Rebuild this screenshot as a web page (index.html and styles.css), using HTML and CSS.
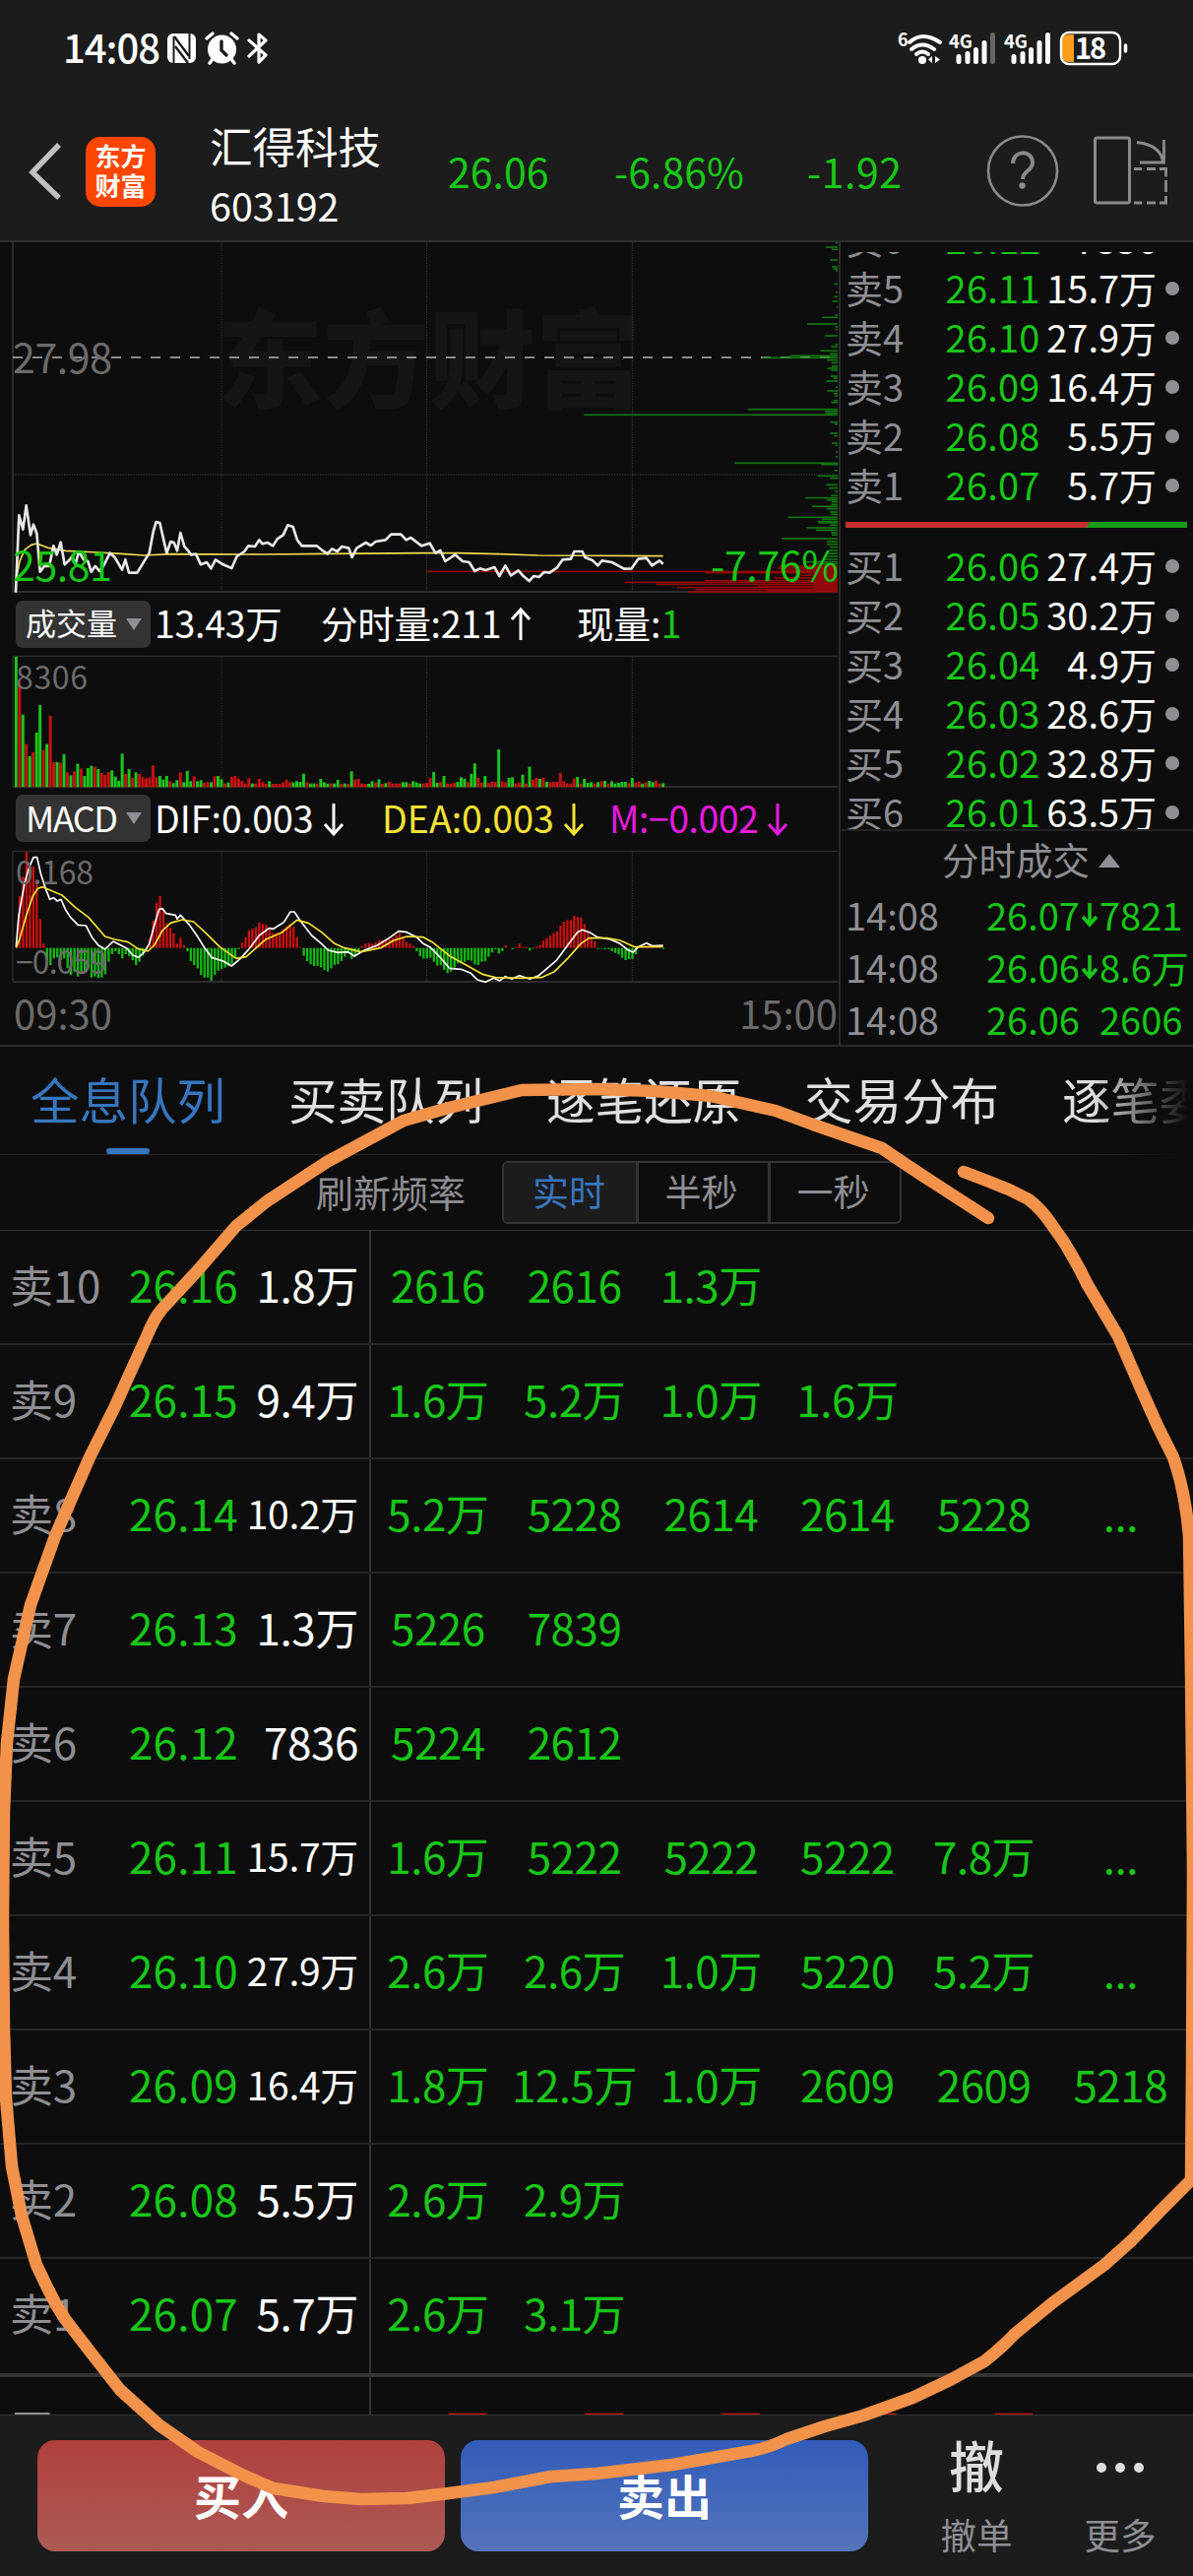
FILE: index.html
```html
<!DOCTYPE html>
<html lang="zh-CN">
<head>
<meta charset="utf-8">
<title>汇得科技 603192</title>
<link rel="stylesheet" href="styles.css">
</head>
<body>
<div class="app">
  <div class="status">
    <span class="clock">14:08</span>
    <svg class="status-icons" width="104" height="34" viewBox="169 32 104 34">
      <rect x="170" y="34" width="29" height="30" rx="6" fill="#fff"/>
      <path d="M176.500 37V64M192.500 34V60" stroke="#1c1c1c" stroke-width="2"/>
      <path d="M177 37L192 57M178 47L191 64" stroke="#1c1c1c" stroke-width="2.400" fill="none"/>
      <circle cx="225.500" cy="50" r="14.500" fill="#fff"/>
      <path d="M210 39l6-5M241 39l-6-5M216 60l-3 4M235 60l3 4" stroke="#fff" stroke-width="3.500" stroke-linecap="round"/>
      <path d="M225 42v9l5 5" stroke="#1c1c1c" stroke-width="3.400" fill="none" stroke-linecap="round"/>
      <path d="M253 41l17 15-7 7V35l7 6-17 16" stroke="#fff" stroke-width="3.200" fill="none" stroke-linejoin="round" stroke-linecap="round"/>
    </svg>
    <svg class="signal" width="236" height="36" viewBox="911 31 236 36">
      <text x="912" y="46.500" font-size="18" font-weight="700">6</text>
      <path d="M924 43Q937 31 955 43M926 50Q937 41 949 50M931 55Q937 50 943 55" fill="none" stroke="#fff" stroke-width="4" stroke-linecap="round"/>
      <circle cx="937" cy="61" r="4"/>
      <path d="M947 57v7l-4-3.500zM950 57v7l5-3.500z"/>
      <text x="964" y="49" font-size="19" font-weight="700" textLength="24" lengthAdjust="spacingAndGlyphs">4G</text>
      <path d="M974 57.500v5M983 54.500v8M991.500 50.500v12M1000 43.500v19" stroke="#fff" stroke-width="5" stroke-linecap="round"/>
      <path d="M1008.500 35.500v27" stroke="#666" stroke-width="5" stroke-linecap="round"/>
      <text x="1020" y="49" font-size="19" font-weight="700" textLength="24" lengthAdjust="spacingAndGlyphs">4G</text>
      <path d="M1030 57.500v5M1039 54.500v8M1047.500 50.500v12M1056 43.500v19M1064.500 35.500v27" stroke="#fff" stroke-width="5" stroke-linecap="round"/>
      <path d="M1091 35v28h-5q-7 0-7-7V42q0-7 7-7z" fill="#ff9c1a"/>
      <rect x="1078" y="33" width="60" height="32" rx="8" fill="none" stroke="#fff" stroke-width="2.400"/>
      <path d="M1143.500 46v6" stroke="#fff" stroke-width="3.500" stroke-linecap="round"/>
      <text x="1092" y="60" font-size="29" font-weight="700" textLength="32">18</text>
    </svg>
  </div>

  <header class="header">
    <svg class="back" width="36" height="60" viewBox="0 0 36 60"><path d="M32 3L5 31L32 57" fill="none" stroke="#c0c0c0" stroke-width="5.500"/></svg>
    <div class="logo"><span>东方</span><span>财富</span></div>
    <div class="stock"><div class="name">汇得科技</div><div class="code">603192</div></div>
    <span class="quote q1">26.06</span>
    <span class="quote q2">-6.86%</span>
    <span class="quote q3">-1.92</span>
    <svg class="tools" width="184" height="74" viewBox="1002 138 184 74" fill="none" stroke="#8a8a8a">
      <ellipse cx="1038" cy="174.500" rx="35" ry="35" stroke-width="2.600"/>
      <path d="M1028 167c0-14 20-14 20-1 0 9-10 8-10 17" stroke-width="4"/>
      <circle cx="1037.500" cy="189.500" r="3.200" fill="#8a8a8a" stroke="none"/>
      <rect x="1111.500" y="141" width="35" height="66" rx="2" stroke-width="3"/>
      <path d="M1154 145.500q25 3 26.500 21M1157 166h24.500V143" stroke-width="2.800"/>
      <path d="M1151 172.500h8M1164 172.500h9M1177 172.500h6.500v8M1183.500 184v12M1183.500 200v7h-6.500M1173 207h-9M1159 207h-8" stroke-width="2.800"/>
    </svg>
  </header>

  <main class="board">
    <section class="charts">
      <svg width="852" height="357" viewBox="0 0 852 357">
        <text class="watermark" x="220" y="160" textLength="432">东方财富</text>
        <path class="axis" d="M13 0V355H851"/>
        <path class="grid" d="M225 0V354M433.500 0V354M642.500 0V354M13 236H851"/>
        <path d="M13 117H851" stroke="#8a8a8a" stroke-width="2" stroke-dasharray="10 10"/>
        <g id="depth" transform="translate(430 -6) scale(.33333)"></g>
        <g transform="translate(0 -6) scale(.33333)" fill="none" stroke-linejoin="round">
          <polyline stroke="#f0dc50" stroke-width="5" points="48,1050 60,990 75,955 95,940 112,936 150,950 200,958 300,963 370,967 440,972 520,968 800,969 1000,967 1290,965 1400,965 1520,968 1640,972 2021,974"/>
          <polyline stroke="#e8e8e8" stroke-width="8" points="48,1085 58,850 70,893 80,820 93,910 102,878 112,905 122,1022 135,1005 150,1005 163,943 173,970 185,932 197,1000 210,988 220,975 230,1000 240,960 255,985 268,990 278,1022 290,1005 303,1020 315,1005 335,965 350,978 372,1016 382,985 393,1025 418,1025 455,965 467,900 476,870 487,873 508,965 520,930 530,933 540,958 550,903 562,945 575,960 583,970 597,968 612,1000 630,993 643,1012 657,985 680,1000 706,1011 722,975 745,960 757,943 777,945 790,925 800,937 815,933 832,943 845,922 863,910 877,880 893,885 906,925 920,943 965,943 980,955 998,967 1012,952 1028,960 1042,945 1063,950 1073,978 1087,950 1115,933 1130,942 1145,930 1175,925 1192,908 1222,908 1238,925 1252,918 1285,943 1310,935 1327,965 1342,957 1357,990 1387,970 1410,990 1430,993 1447,1020 1463,1012 1480,1017 1507,1008 1522,1035 1540,1003 1557,1033 1580,1018 1595,1035 1613,1050 1627,1035 1643,1038 1658,1023 1675,1025 1697,1010 1715,985 1740,983 1750,960 1775,960 1783,978 1807,988 1822,1003 1835,988 1865,993 1902,1013 1925,1012 1945,983 1970,980 1987,1003 2010,988 2021,998"/>
        </g>
        <text class="scale big" x="13" y="133" textLength="101">27.98</text>
        <text class="scale big up" x="13" y="344" textLength="101">25.81</text>
        <text class="scale big up" x="722" y="344" textLength="130">-7.76%</text>
      </svg>

      <div class="legend">
        <span class="pick"><b>成交量</b><i></i></span>
        <span class="l1">13.43万</span><span class="l2">分时量:211<svg class="arrow" width="22" height="34" viewBox="0 0 22 34"><path d="M11 33V2M2 12l9-10 9 10"/></svg></span><span class="l3">现量:<u>1</u></span>
      </div>

      <svg width="852" height="136" viewBox="0 0 852 136">
        <path class="axis thin" d="M13 135V2.500H851"/><path class="axis" d="M13 135H851"/>
        <path class="grid" d="M225 3V134M433.500 3V134M642.500 3V134"/>
        <g id="volume" transform="translate(0 -14) scale(.33333)"></g>
        <text class="scale" x="16" y="36" textLength="73">8306</text>
      </svg>

      <div class="legend">
        <span class="pick"><b class="latin">MACD</b><i></i></span>
        <span class="m1">DIF:0.003<svg class="arrow" width="22" height="34" viewBox="0 0 22 34"><path d="M11 1V32M2 22l9 10 9-10"/></svg></span><span class="m2">DEA:0.003<svg class="arrow" width="22" height="34" viewBox="0 0 22 34"><path d="M11 1V32M2 22l9 10 9-10"/></svg></span><span class="m3">M:−0.002<svg class="arrow" width="22" height="34" viewBox="0 0 22 34"><path d="M11 1V32M2 22l9 10 9-10"/></svg></span>
      </div>

      <svg width="852" height="138" viewBox="0 0 852 138">
        <path class="axis thin" d="M13 135V2.500H851"/><path class="axis" d="M13 135H851"/>
        <path class="grid" d="M225 3V134M433.500 3V134M642.500 3V134"/>
        <g id="macd" transform="translate(0 -212) scale(.33333)"></g>
        <g transform="translate(0 -212) scale(.33333)" fill="none" stroke-width="5" stroke-linejoin="round">
          <polyline stroke="#fff" points="49,935 57,840 75,740 88,695 102,662 113,662 125,715 140,760 152,790 163,785 175,795 186,790 200,822 215,845 238,868 262,870 280,905 300,930 320,942 345,918 385,938 405,960 422,967 440,950 455,925 470,870 485,820 495,818 507,833 535,838 540,850 550,838 575,865 600,900 623,937 645,967 680,978 706,993 733,970 760,940 790,900 820,878 833,880 865,860 885,828 897,828 915,855 950,900 980,925 1000,945 1030,952 1060,950 1080,963 1110,945 1150,930 1190,905 1215,887 1240,890 1270,905 1290,925 1310,935 1340,965 1370,1000 1405,1003 1435,1015 1455,1035 1480,1042 1505,1030 1523,1038 1540,1025 1560,1033 1583,1022 1615,1033 1642,1022 1695,977 1730,930 1760,890 1775,883 1800,892 1820,905 1860,912 1890,925 1915,945 1930,951 1945,935 1970,923 1990,932 2021,930"/>
          <polyline stroke="#f5e236" points="49,938 60,910 80,840 100,780 115,757 130,752 190,778 230,815 270,845 320,903 350,912 390,920 420,940 450,948 470,930 495,885 520,862 555,852 590,858 630,895 670,935 720,970 750,965 810,912 860,890 905,853 940,862 980,890 1020,925 1050,938 1100,950 1160,938 1200,915 1240,903 1290,905 1320,922 1370,962 1430,995 1470,1018 1510,1028 1590,1030 1650,1028 1690,1010 1730,970 1770,925 1795,908 1850,908 1890,915 1935,935 2021,934"/>
        </g>
        <text class="scale" x="16" y="36" textLength="79">0.168</text>
        <text class="scale" x="16" y="127" textLength="93">−0.059</text>
      </svg>
      <div class="times"><span>09:30</span><span>15:00</span></div>
    </section>

    <aside class="book">
      <div class="levels">
        <div class="level"><span>卖6</span><b>26.12</b><em>7836</em></div>
        <div class="level"><span>卖5</span><b>26.11</b><em>15.7万</em><i></i></div>
        <div class="level"><span>卖4</span><b>26.10</b><em>27.9万</em><i></i></div>
        <div class="level"><span>卖3</span><b>26.09</b><em>16.4万</em><i></i></div>
        <div class="level"><span>卖2</span><b>26.08</b><em>5.5万</em><i></i></div>
        <div class="level"><span>卖1</span><b>26.07</b><em>5.7万</em><i></i></div>
        <div class="ratio"></div>
        <div class="level"><span>买1</span><b>26.06</b><em>27.4万</em><i></i></div>
        <div class="level"><span>买2</span><b>26.05</b><em>30.2万</em><i></i></div>
        <div class="level"><span>买3</span><b>26.04</b><em>4.9万</em><i></i></div>
        <div class="level"><span>买4</span><b>26.03</b><em>28.6万</em><i></i></div>
        <div class="level"><span>买5</span><b>26.02</b><em>32.8万</em><i></i></div>
        <div class="level"><span>买6</span><b>26.01</b><em>63.5万</em><i></i></div>
      </div>
      <div class="trades-title"><span>分时成交</span><i></i></div>
      <div class="trade"><span>14:08</span><b>26.07</b><svg width="16" height="26" viewBox="0 0 16 26"><path d="M8 1v22M1 15l7 8 7-8"/></svg><em>7821</em></div>
      <div class="trade"><span>14:08</span><b>26.06</b><svg width="16" height="26" viewBox="0 0 16 26"><path d="M8 1v22M1 15l7 8 7-8"/></svg><em>8.6万</em></div>
      <div class="trade"><span>14:08</span><b>26.06</b><svg width="16" height="26"></svg><em>2606</em></div>
    </aside>
  </main>

  <nav class="tabs"><span class="tab on">全息队列</span><span class="tab">买卖队列</span><span class="tab">逐笔还原</span><span class="tab">交易分布</span><span class="tab">逐笔委托</span></nav>

  <div class="refresh">
    <span class="refresh-label">刷新频率</span>
    <div class="segments"><span class="on">实时</span><span>半秒</span><span>一秒</span></div>
  </div>

  <section class="queue">
    <div class="row"><span>卖10</span><b>26.16</b><em>1.8万</em><div class="orders"><i>2616</i><i>2616</i><i>1.3万</i></div></div>
    <div class="row"><span>卖9</span><b>26.15</b><em>9.4万</em><div class="orders"><i>1.6万</i><i>5.2万</i><i>1.0万</i><i>1.6万</i></div></div>
    <div class="row"><span>卖8</span><b>26.14</b><em class="long">10.2万</em><div class="orders"><i>5.2万</i><i>5228</i><i>2614</i><i>2614</i><i>5228</i><i>...</i></div></div>
    <div class="row"><span>卖7</span><b>26.13</b><em>1.3万</em><div class="orders"><i>5226</i><i>7839</i></div></div>
    <div class="row"><span>卖6</span><b>26.12</b><em>7836</em><div class="orders"><i>5224</i><i>2612</i></div></div>
    <div class="row"><span>卖5</span><b>26.11</b><em class="long">15.7万</em><div class="orders"><i>1.6万</i><i>5222</i><i>5222</i><i>5222</i><i>7.8万</i><i>...</i></div></div>
    <div class="row"><span>卖4</span><b>26.10</b><em class="long">27.9万</em><div class="orders"><i>2.6万</i><i>2.6万</i><i>1.0万</i><i>5220</i><i>5.2万</i><i>...</i></div></div>
    <div class="row"><span>卖3</span><b>26.09</b><em class="long">16.4万</em><div class="orders"><i>1.8万</i><i>12.5万</i><i>1.0万</i><i>2609</i><i>2609</i><i>5218</i></div></div>
    <div class="row"><span>卖2</span><b>26.08</b><em>5.5万</em><div class="orders"><i>2.6万</i><i>2.9万</i></div></div>
    <div class="row last"><span>卖1</span><b>26.07</b><em>5.7万</em><div class="orders"><i>2.6万</i><i>3.1万</i></div></div>
    <div class="row bid"><span>买1</span><b>26.06</b><em class="long">27.4万</em><div class="orders"><i>2.6万</i><i>2.6万</i><i>2.6万</i><i>5.2万</i><i>2.6万</i></div></div>
  </section>

  <footer class="footer">
    <div class="btn buy">买入</div>
    <div class="btn sell">卖出</div>
    <div class="act cancel"><strong>撤</strong><span>撤单</span></div>
    <div class="act more"><svg width="48" height="12" viewBox="0 0 48 12" fill="#ddd"><circle cx="5" cy="6" r="5"/><circle cx="24" cy="6" r="5"/><circle cx="43" cy="6" r="5"/></svg><span>更多</span></div>
  </footer>

  <svg class="ink" width="1212" height="2616" viewBox="0 0 1212 2616">
    <path d="M979 1190L1005 1200L1025 1208L1045 1218Q1058 1228 1068 1243L1080 1260Q1094 1282 1105 1305L1136 1357L1159 1410L1176 1448L1192 1480Q1204 1514 1208 1560L1210 1700L1212 1900L1211 2100L1210 2214L1180 2244L1150 2275L1122 2300L1070 2338L1031 2370Q1017 2385 1000 2398L965 2417L927 2435L877 2453L838 2464L799 2477Q783 2485 764 2489L683 2503L606 2512L560 2515L502 2526L456 2532L414 2537L367 2538L329 2535L278 2527Q258 2519 240 2510L201 2490L162 2463L122 2427L93 2390L66 2355Q56 2340 48 2323L37 2300L22 2250L12 2200L6 2130L4 2060L3 1950L4 1840L7 1770L14 1705L31 1630L56 1560L91 1480L116 1430L150 1355Q156 1340 164 1330L201 1290L240 1245L271 1220L332 1180L410 1138L456 1125L530 1107L606 1106L665 1108L722 1113L788 1128L826 1142L896 1166Q925 1186 950 1202L1004 1237"/>
  </svg>
</div>
<script src="script.js"></script>
</body>
</html>
```

FILE: styles.css
```css
* { box-sizing: border-box; }
body { margin: 0; background: #0d0d0d; color: #fff; font-family: "Noto Sans CJK SC", sans-serif; }
b, em, i, u, strong { font-weight: 400; font-style: normal; text-decoration: none; }
svg { display: block; flex: none; overflow: visible; }
span, b, em { white-space: nowrap; }
.app { position: relative; width: 1212px; height: 2616px; overflow: hidden; display: flex; flex-direction: column; }

.status { height: 100px; background: #1c1c1c; display: flex; align-items: center; padding: 0 65px 2px 64px; }
.clock { font-size: 40px; line-height: 58px; font-weight: 500; width: 105px; letter-spacing: -1px; padding-bottom: 4px; }
.signal { margin-left: auto; fill: #fff; }

.header { height: 146px; background: #1c1c1c; border-bottom: 2px solid #2e2e2e; display: flex; align-items: center; padding: 4px 0 0 28px; }
.back { margin-right: 23px; }
.logo { width: 71px; height: 71px; border-radius: 15px; background: #ff4600; display: flex; flex-direction: column; align-items: center; justify-content: center; font-size: 26px; line-height: 30px; padding-bottom: 3px; }
.logo span { font-weight: 700; }
.stock { margin-left: 55px; width: 242px; margin-top: 8px; }
.name { font-size: 43.500px; line-height: 60px; }
.code { font-size: 39.500px; line-height: 60px; }
.quote { color: #18c718; font-size: 41px; line-height: 60px; padding-bottom: 3px; }
.q1 { width: 169px; }
.q2 { width: 196px; }
.q3 { width: 183px; letter-spacing: .5px; }

.board { height: 817px; display: flex; border-bottom: 2px solid #2a2a2a; }
.charts { width: 852px; display: flex; flex-direction: column; }
.axis { fill: none; stroke: #2c2c2c; stroke-width: 2; }
.thin { stroke-width: 1.300; }
.grid { stroke: #303030; stroke-width: 1.300; stroke-dasharray: 1.300 1.300; }
.watermark { font-size: 108px; font-weight: 900; fill: #151515; }
.scale { font-size: 32px; fill: #6b6b6b; }
.big { font-size: 41px; }
.up { fill: #18c718; }
.legend { height: 61px; display: flex; align-items: center; padding-left: 16px; font-size: 37.500px; line-height: 56px; }
.legend + svg + .legend { height: 62px; }
.legend > span { display: flex; align-items: center; padding-bottom: 3px; }
.arrow { fill: none; stroke: currentColor; stroke-width: 3; margin: 4px 0 0 9px; }
.legend .pick { width: 137px; height: 48px; background: #333; border-radius: 7px; padding: 0 9px 4px 10px; justify-content: space-between; margin-right: 4px; }
.pick b { font-size: 31px; }
.pick .latin { font-size: 36px; letter-spacing: -1.500px; }
.pick i { border: 8px solid transparent; border-top: 12px solid #8e8e93; border-bottom: 0; margin-top: 4px; }
.l1 { width: 169px; letter-spacing: -.3px; }
.l2 { width: 260px; letter-spacing: -.3px; }
.l3 u { color: #18c718; }
.m1 { width: 231px; }
.m2 { width: 231px; color: #f5e236; }
.m3 { color: #e61adf; letter-spacing: -.5px; }
.times { display: flex; justify-content: space-between; color: #6b6b6b; font-size: 40px; line-height: 54px; padding: 1px 1px 0 14px; }

.book { width: 360px; border-left: 2px solid #2c2c2c; padding: 10px 0 0 5px; }
.levels { height: 588px; overflow: hidden; padding-right: 14px; border-bottom: 2px solid #242424; margin-left: -5px; padding-left: 5px; }
.level { height: 50px; display: flex; align-items: center; font-size: 38px; line-height: 50px; padding-bottom: 5px; }
.level:first-child { margin-top: -37px; }
.level span { width: 102px; color: #8e8e93; }
.level b { color: #18c718; width: 96px; letter-spacing: .2px; }
.level em { width: 119px; display: flex; justify-content: flex-end; }
.level i { width: 14px; height: 14px; border-radius: 50%; background: #8e8e93; margin: 2px 0 0 9px; }
.ratio { height: 6px; margin: 11px -8px 15px 0; background: linear-gradient(125deg, #c4302e 203px, #169c16 204px); }
.trades-title { height: 61px; display: flex; align-items: center; padding: 0 0 6px 98px; color: #8e8e93; font-size: 37.500px; line-height: 55px; }
.trades-title i { border: 11px solid transparent; border-bottom: 14px solid #8e8e93; border-top: 0; margin: 4px 0 0 9px; }
.trade { height: 53px; display: flex; align-items: center; font-size: 38px; line-height: 50px; padding-bottom: 5px; }
.trade span { width: 143px; color: #8e8e93; }
.trade b { color: #18c718; width: 97px; }
.trade em { color: #18c718; margin-left: 2px; }
.trade svg { fill: none; stroke: #18c718; stroke-width: 3.500; }

.tabs { height: 110px; display: flex; gap: 64px; padding: 0 0 0 31px; border-bottom: 1px solid #2a2a2a; font-size: 49.500px; line-height: 106px; color: #e0e0e0; overflow: hidden; -webkit-mask-image: linear-gradient(90deg, #000 1110px, transparent 1208px); mask-image: linear-gradient(90deg, #000 1110px, transparent 1208px); }
.tab { flex: none; display: flex; flex-direction: column; align-items: center; }
.tab.on { color: #3776bf; }
.tab.on::after { content: ""; width: 44px; height: 6px; margin-top: -3px; border-radius: 3px; background: #3776bf; }

.refresh { height: 77px; display: flex; align-items: center; padding-left: 321px; border-bottom: 1px solid #333; color: #8e8e93; font-size: 38px; }
.refresh-label { width: 189px; line-height: 60px; padding-bottom: 3px; }
.segments { width: 406px; height: 64px; border: 2px solid #333; border-radius: 6px; display: grid; grid-template-columns: 1fr 1fr 1fr; overflow: hidden; }
.segments span { text-align: center; line-height: 57px; font-size: 37px; padding-right: 2px; }
.segments span + span { border-left: 3px solid #333; padding-right: 4px; }
.segments .on { background: #1c1c1c; color: #3776bf; }

.queue { height: 1202px; overflow: hidden; }
.row { height: 116px; border-bottom: 2px solid #262626; display: flex; font-size: 44px; line-height: 109px; letter-spacing: -.2px; }
.row span { width: 119px; padding-left: 10px; color: #8e8e93; }
.row b { width: 123px; padding-left: 12px; color: #18c718; letter-spacing: .2px; }
.row em { width: 133px; display: flex; justify-content: flex-end; padding-right: 11px; letter-spacing: -.4px; }
.row .long { font-size: 39px; letter-spacing: -.3px; }
.orders { border-left: 2px solid #333; width: 837px; display: grid; grid-template-columns: repeat(6, 138.700px); color: #18c718; text-align: center; letter-spacing: -.5px; }
.orders i { padding-right: 3px; }
.last { height: 120px; border-bottom: 4px solid #333; }
.last .orders { height: 116px; }
.bid { line-height: 105px; }
.bid .orders { color: #d01010; }

.footer { flex: 1; background: #1c1c1c; border-top: 1px solid #333; display: flex; padding: 25px 0 0 38px; }
.btn { width: 414px; height: 113px; border-radius: 18px; margin-right: 16px; text-align: center; font-size: 48px; line-height: 110px; font-weight: 700; }
.buy { background: linear-gradient(#b0403c, #ac5a55); }
.sell { background: linear-gradient(#315cb9, #5474ba); }
.act { display: flex; flex-direction: column; align-items: center; color: #8e8e93; font-size: 36.500px; line-height: 54px; }
.cancel { width: 110px; margin-left: 39px; }
.cancel strong { font-size: 56px; line-height: 82px; height: 86px; margin-top: -17px; color: #ddd; font-weight: 500; }
.more { width: 110px; margin-left: 36px; }
.more svg { margin: 22px 0 35px; }

.ink { position: absolute; left: 0; top: 0; fill: none; stroke: #f2924b; stroke-width: 12.500; stroke-linecap: round; stroke-linejoin: round; pointer-events: none; }
```

FILE: script.js
```js
const NS = "http://www.w3.org/2000/svg";
const STEP = 10.4333;

function bar(parent, x, y, w, h, fill) {
  const r = document.createElementNS(NS, "rect");
  r.setAttribute("x", x);
  r.setAttribute("y", y);
  r.setAttribute("width", w);
  r.setAttribute("height", h);
  r.setAttribute("fill", fill);
  parent.appendChild(r);
}

// Order depth by price: y:left edge, bars run to the right axis
const asks = "20:1257 33:1227 40:1245 72:1240 93:1246 99:1250 105:1257 145:1252 171:1257 184:1252 198:1247 215:1260 240:1255 247:1216 267:1170 276:1256 284:1256 303:1225 329:1255 336:1243 349:1210 358:1240 364:1118 370:1034 377:1230 385:1245 396:1245 402:1232 408:1243 426:1242 432:1250 441:1228 460:1257 471:1231 479:1250 486:1255 500:1250 506:1243 527:990 533:1225 539:1225 544:490 566:1240 572:1253 600:1240 608:1252 630:1246 637:1257 657:1257 672:1257 691:948 695:1213 713:1253 730:1203 737:1240 757:1228 767:1236 777:1255 790:1243 797:1165 803:1230 809:1245 817:1243 823:1185 830:1230 840:1240 847:1243 856:1111 862:1215 869:1203 873:1205 880:1240 888:1168 895:1197 903:1243 910:1245 921:1092 930:1230 938:1230 947:1240 957:1235 966:1228 975:1225 984:1220 992:1160 998:1190";
const bids = "1005:1085 1011:1080 1017:1090 1021:9 1025:858 1033:1150 1041:1070 1049:858 1054:614 1060:710 1066:1020 1070:773 1076:830 1079:1047 1083:807";
const depth = document.getElementById("depth");
for (const [set, color] of [[asks, "#118a11"], [bids, "#a80808"]]) {
  for (const item of set.split(" ")) {
    const [y, left] = item.split(":").map(Number);
    bar(depth, left, y - 2.5, 1263 - left, 5, color);
  }
}
bar(depth, 1190, 1003, 73, 80, "#a80808");
depth.setAttribute("opacity", ".85");

// Minute volume: direction and bar top
const volume = "G50 R125 G227 R317 G354 R342 G282 G198 R335 G317 R231 R372 G372 R374 G348 R403 G412 R400 G377 R392 G414 G390 G383 R387 G393 R405 R411 R402 G397 G416 G429 G346 R408 G393 R420 G403 R408 R418 R422 R418 R382 R418 G414 G425 G414 R430 G436 G427 R403 G433 G399 G430 R415 G430 G427 R435 R433 G433 R415 G414 G424 R437 G434 R417 R414 R422 R429 R437 R421 G437 R437 R423 R433 R438 G430 R438 R438 R438 R434 R425 R433 G434 G430 G432 G407 R433 G437 G437 R437 G423 G433 G437 R437 G437 G426 R438 G437 R438 G400 R425 R423 R437 R438 G438 G430 R434 G424 R438 G436 R432 R437 R437 R437 G433 G433 R437 G430 G434 G437 R437 R435 R420 G402 G435 R432 G414 R437 R437 R435 G432 G418 G423 R433 G408 G376 R420 R434 G414 R435 R432 R432 G333 R430 R433 G420 G418 R437 R434 G410 R437 G386 R425 R420 G423 R419 G432 R434 R432 R432 R405 R430 R437 R437 R422 G417 R437 G423 G435 G433 R437 G433 R430 G429 R437 G430 G437 G435 G432 G432 R436 G420 R434 R431 G437 R433 G429 G433 R428 R437 G436";
volume.split(" ").forEach((v, i) => {
  const top = Number(v.slice(1));
  bar(document.getElementById("volume"), 44.5 + i * STEP, top, 9, 448 - top, v[0] === "G" ? "#1dc41d" : "#c31212");
});

// MACD histogram around the zero line
const ZERO = 938;
const macd = [938,780,720,645,690,690,730,850,925,975,990,970,967,975,970,1000,1020,1010,1025,1010,1015,1000,1028,1025,1030,1028,1018,980,957,948,957,970,957,963,975,990,980,962,945,910,855,800,780,820,862,877,893,925,907,930,948,978,990,1000,1020,1028,1028,1038,1020,1007,1003,998,993,988,970,942,922,905,885,880,875,860,865,867,880,893,893,893,880,872,865,873,905,936,962,978,987,993,993,997,1005,1010,1000,990,987,978,965,955,972,965,952,933,925,922,925,920,915,915,913,910,908,900,893,905,920,925,932,948,963,970,970,968,980,992,990,1005,1015,1010,998,985,985,980,975,977,988,990,980,978,965,952,942,955,948,930,938,942,935,925,935,935,946,940,933,930,915,908,900,893,887,870,858,853,853,840,843,845,865,890,905,918,941,940,942,942,948,953,958,968,975,972,972,957,938,936,934,925,930,936,936,941];
macd.forEach((v, i) => {
  bar(document.getElementById("macd"), 46 + i * STEP, Math.min(v, ZERO), 7, Math.abs(v - ZERO), v < ZERO ? "#c81010" : "#14b814");
});
```
